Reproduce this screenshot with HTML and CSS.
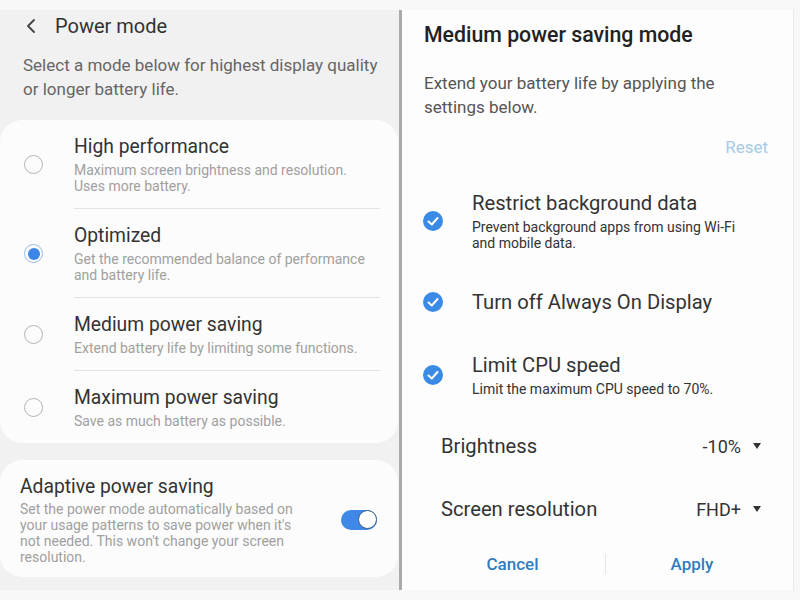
FILE: index.html
```html
<!DOCTYPE html>
<html lang="en">
<head>
  <meta charset="UTF-8">
  <title>Power mode</title>
  <link rel="stylesheet" href="styles.css">
</head>
<body>
  <div class="screen">

    <!-- left: power mode list -->
    <div class="panel-left">
      <div class="header">
        <svg class="back" width="14" height="16" viewBox="0 0 14 16">
          <polyline points="10,2 4,8 10,14" fill="none" stroke="#444" stroke-width="1.8" stroke-linecap="round" stroke-linejoin="round"/>
        </svg>
        <span class="header-title">Power mode</span>
      </div>
      <p class="intro">Select a mode below for highest display quality or longer battery life.</p>

      <div class="card">
        <div class="mode">
          <span class="radio"></span>
          <div class="mode-text">
            <div class="mode-title">High performance</div>
            <div class="mode-sub">Maximum screen brightness and resolution.<br>Uses more battery.</div>
          </div>
        </div>
        <div class="mode">
          <span class="radio on"></span>
          <div class="mode-text">
            <div class="mode-title">Optimized</div>
            <div class="mode-sub">Get the recommended balance of performance<br>and battery life.</div>
          </div>
        </div>
        <div class="mode">
          <span class="radio"></span>
          <div class="mode-text">
            <div class="mode-title">Medium power saving</div>
            <div class="mode-sub">Extend battery life by limiting some functions.</div>
          </div>
        </div>
        <div class="mode last">
          <span class="radio"></span>
          <div class="mode-text">
            <div class="mode-title">Maximum power saving</div>
            <div class="mode-sub">Save as much battery as possible.</div>
          </div>
        </div>
      </div>

      <div class="card adaptive">
        <div class="adaptive-text">
          <div class="mode-title">Adaptive power saving</div>
          <div class="mode-sub">Set the power mode automatically based on your usage patterns to save power when it's not needed. This won't change your screen resolution.</div>
        </div>
        <span class="switch"><span class="knob"></span></span>
      </div>
    </div>

    <!-- right: medium power saving dialog -->
    <div class="panel-right">
      <h2>Medium power saving mode</h2>
      <p class="intro">Extend your battery life by applying the settings below.</p>
      <div class="reset">Reset</div>

      <div class="check-row">
        <span class="check"><svg width="20" height="20" viewBox="0 0 20 20"><polyline points="5.5,10.5 8.8,13.5 14.5,7" fill="none" stroke="#fff" stroke-width="2" stroke-linecap="round" stroke-linejoin="round"/></svg></span>
        <div>
          <div class="check-title">Restrict background data</div>
          <div class="check-sub">Prevent background apps from using Wi-Fi<br>and mobile data.</div>
        </div>
      </div>
      <div class="check-row">
        <span class="check"><svg width="20" height="20" viewBox="0 0 20 20"><polyline points="5.5,10.5 8.8,13.5 14.5,7" fill="none" stroke="#fff" stroke-width="2" stroke-linecap="round" stroke-linejoin="round"/></svg></span>
        <div>
          <div class="check-title">Turn off Always On Display</div>
        </div>
      </div>
      <div class="check-row">
        <span class="check"><svg width="20" height="20" viewBox="0 0 20 20"><polyline points="5.5,10.5 8.8,13.5 14.5,7" fill="none" stroke="#fff" stroke-width="2" stroke-linecap="round" stroke-linejoin="round"/></svg></span>
        <div>
          <div class="check-title">Limit CPU speed</div>
          <div class="check-sub">Limit the maximum CPU speed to 70%.</div>
        </div>
      </div>

      <div class="select-row">
        <span>Brightness</span>
        <span class="value">-10% <span class="caret"></span></span>
      </div>
      <div class="select-row">
        <span>Screen resolution</span>
        <span class="value">FHD+ <span class="caret"></span></span>
      </div>

      <div class="buttons">
        <span class="btn">Cancel</span>
        <span class="btn-sep"></span>
        <span class="btn">Apply</span>
      </div>
    </div>

  </div>
</body>
</html>
```

FILE: styles.css
```css
body {
  margin: 0;
  font-family: Roboto, "Noto Sans", sans-serif;
  background: #f8f8f8;
  color: #333;
}
.screen {
  display: flex;
  padding-top: 10px;
  height: 580px;
}
.panel-left {
  width: 399px;
  background: #f1f1f1;
}
.header {
  display: flex;
  align-items: center;
  height: 32px;
  padding-left: 24px;
}
.back {
  margin-right: 17px;
}
.header-title {
  font-size: 20px;
  color: #333;
}
.intro {
  margin: 11px 0 0;
  padding: 0 18px 0 23px;
  font-size: 17px;
  line-height: 24px;
  color: #666;
}
.card {
  background: #fcfcfc;
  border-radius: 22px;
  width: 398px;
  margin-top: 19px;
}
.mode {
  display: flex;
  align-items: center;
}
.radio {
  flex: none;
  width: 17px;
  height: 17px;
  border: 1.5px solid #b4b4b4;
  border-radius: 50%;
  margin: 0 31px 0 24px;
  box-sizing: content-box;
  position: relative;
}
.radio.on {
  border-color: #9bbde8;
}
.radio.on::after {
  content: "";
  position: absolute;
  left: 2.5px;
  top: 2.5px;
  width: 12px;
  height: 12px;
  border-radius: 50%;
  background: #3b86e6;
}
.mode-text {
  flex: 1;
  margin-right: 18px;
  padding: 15px 0 14px;
  border-bottom: 1px solid #e3e3e3;
}
.mode.last .mode-text {
  border-bottom: none;
}
.mode-title {
  font-size: 19.3px;
  line-height: 24px;
  color: #333;
  margin-bottom: 3px;
}
.mode-sub {
  font-size: 14px;
  line-height: 16px;
  color: #a0a0a0;
}
.adaptive {
  display: flex;
  align-items: center;
  margin-top: 17px;
  padding: 15px 21px 12px 20px;
  box-sizing: border-box;
}
.adaptive .mode-sub {
  margin-top: -1px;
}
.adaptive-text {
  width: 292px;
  margin-right: auto;
}
.switch {
  flex: none;
  position: relative;
  width: 36px;
  height: 20px;
  border-radius: 10px;
  background: #3f88e8;
}
.knob {
  position: absolute;
  right: 0;
  top: 0;
  width: 17px;
  height: 17px;
  border-radius: 50%;
  background: #fff;
  border: 1.5px solid #3a5f86;
  box-sizing: content-box;
}

.panel-right {
  width: 391px;
  background: #fdfdfd;
  border-left: 3px solid #aaa;
  border-right: 1px solid #ebebeb;
}
h2 {
  margin: 11px 0 0;
  padding-left: 22px;
  font-size: 21.3px;
  line-height: 28px;
  font-weight: 500;
  color: #222;
}
.panel-right .intro {
  margin-top: 22px;
  padding: 0 40px 0 22px;
  color: #555;
}
.reset {
  margin-top: 16px;
  margin-bottom: 13px;
  padding-right: 25px;
  text-align: right;
  font-size: 17px;
  line-height: 24px;
  color: #a5cbe8;
}
.check-row {
  display: flex;
  align-items: center;
  padding: 19px 0 20px;
}
.check {
  flex: none;
  width: 20px;
  height: 20px;
  border-radius: 50%;
  background: #3a8be6;
  margin: 0 29px 0 21px;
}
.check svg {
  display: block;
}
.check-title {
  font-size: 20.2px;
  line-height: 24px;
  color: #333;
}
.check-sub {
  margin-top: 4px;
  font-size: 14px;
  line-height: 16px;
  color: #333;
}
.select-row {
  display: flex;
  justify-content: space-between;
  align-items: center;
  height: 24px;
  margin-top: 17px;
  margin-bottom: 39px;
  padding: 0 32px 0 39px;
  font-size: 20.2px;
  color: #333;
}
.select-row + .select-row {
  margin-top: 0;
}
.value {
  display: flex;
  align-items: center;
  font-size: 18px;
}
.caret {
  width: 0;
  height: 0;
  margin-left: 12px;
  border-left: 4.5px solid transparent;
  border-right: 4.5px solid transparent;
  border-top: 6px solid #333;
}
.buttons {
  display: flex;
  align-items: center;
  padding-left: 18px;
  margin-top: -16px;
  height: 40px;
}
.btn {
  width: 185px;
  text-align: center;
  font-size: 17px;
  font-weight: 500;
  color: #2f7dc2;
}
.btn + .btn-sep + .btn {
  width: 172px;
}
.btn-sep {
  width: 1px;
  height: 20px;
  background: #e6e6e6;
}
```
